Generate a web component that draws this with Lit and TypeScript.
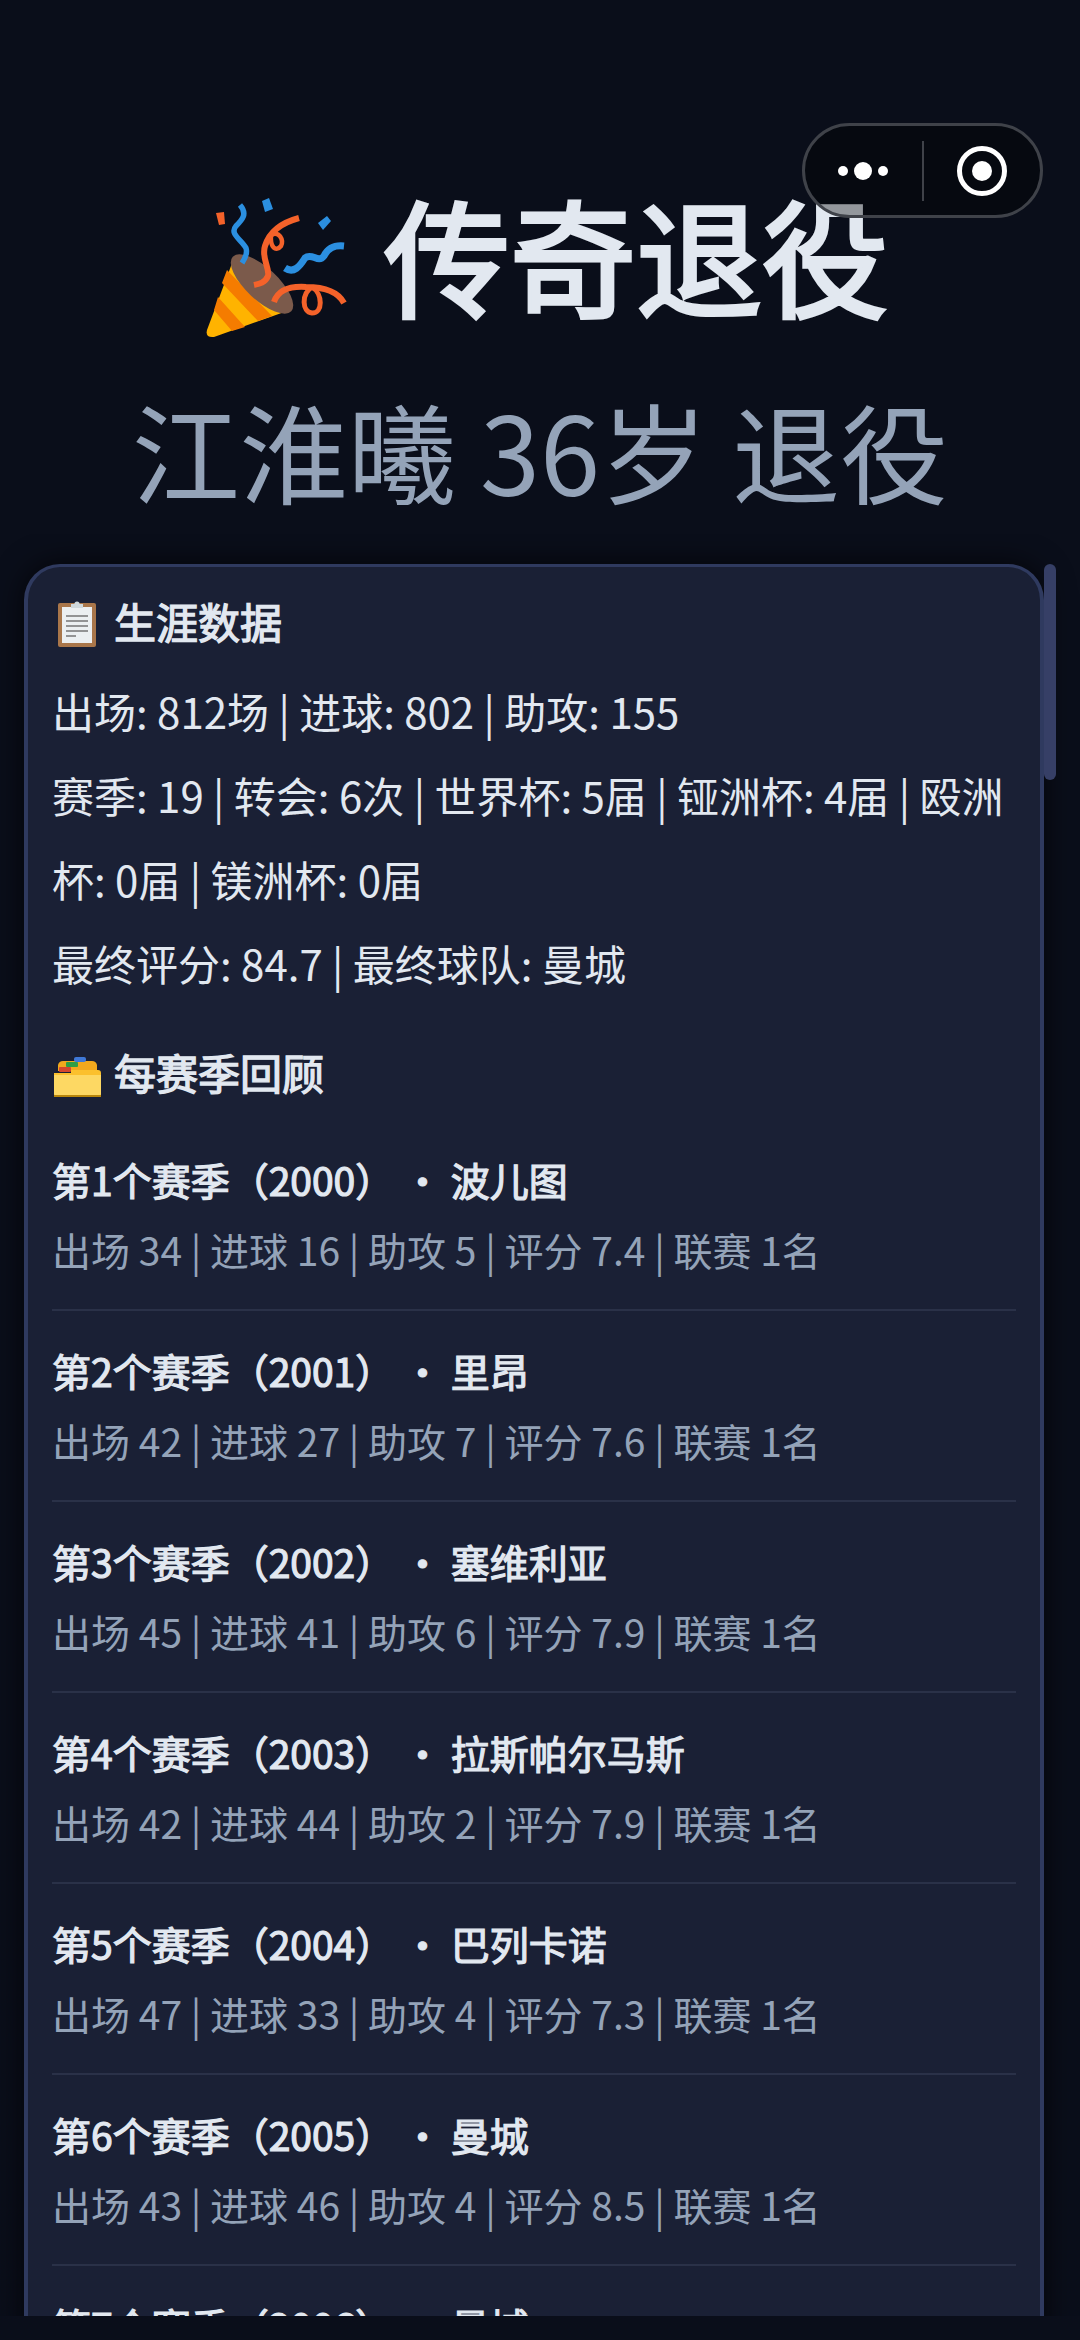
import { LitElement, html, css, svg } from 'lit';
import { customElement } from 'lit/decorators.js';

const seasons = [
  { n: 1, year: 2000, club: '波儿图', apps: 34, goals: 16, assists: 5, rating: '7.4' },
  { n: 2, year: 2001, club: '里昂', apps: 42, goals: 27, assists: 7, rating: '7.6' },
  { n: 3, year: 2002, club: '塞维利亚', apps: 45, goals: 41, assists: 6, rating: '7.9' },
  { n: 4, year: 2003, club: '拉斯帕尔马斯', apps: 42, goals: 44, assists: 2, rating: '7.9' },
  { n: 5, year: 2004, club: '巴列卡诺', apps: 47, goals: 33, assists: 4, rating: '7.3' },
  { n: 6, year: 2005, club: '曼城', apps: 43, goals: 46, assists: 4, rating: '8.5' },
  { n: 7, year: 2006, club: '曼城', apps: 44, goals: 40, assists: 5, rating: '8.3' },
];

const popper = svg`<svg class="popper" viewBox="0 0 170 170">
  <path d="M42 78 L15 150 Q13 158 22 157 L98 130 Z" fill="#ffb300"/>
  <path d="M35 90 L80 136 L66 141 L30 103 Z M26 117 L53 147 L40 151 L22 130 Z" fill="#f57c00"/>
  <ellipse cx="70" cy="104" rx="40" ry="16" transform="rotate(43 70 104)" fill="#7b5a4b"/>
  <path d="M48 25 C56 34 50 40 44 46 C37 54 50 60 54 68 C56 74 52 80 50 83" fill="none" stroke="#2b8fe0" stroke-width="5.5"/>
  <path d="M107 38 C92 42 78 50 73 66 C69 78 78 88 76 96 C73 103 67 104 62 105" fill="none" stroke="#f4622a" stroke-width="6"/>
  <path d="M79 55 C87 50 92 60 89 66 C84 72 78 68 79 55" fill="none" stroke="#f4622a" stroke-width="4.5"/>
  <path d="M93 88 C102 94 108 86 113 78 C120 72 126 84 132 76 C136 68 142 65 152 66" fill="none" stroke="#2b8fe0" stroke-width="7"/>
  <path d="M82 122 C86 110 98 106 114 107 C130 107 145 110 152 123" fill="none" stroke="#f4622a" stroke-width="6"/>
  <path d="M120 107 C109 114 110 132 120 133 C131 133 131 114 120 107" fill="none" stroke="#f4622a" stroke-width="5"/>
  <path d="M24 33 L32 32 L33 44 L27 45 Z" fill="#f4622a"/>
  <path d="M70 21 L77 18 L81 29 L73 32 Z" fill="#2b8fe0"/>
  <path d="M126 43 L135 36 L139 41 L131 50 Z" fill="#2b8fe0"/>
</svg>`;

const clipboard = svg`<svg class="clipboard" viewBox="0 0 38 46">
  <rect x="0" y="2" width="38" height="44" rx="2" fill="#a9764a"/>
  <rect x="4" y="6" width="30" height="36" fill="#eceff1"/>
  <path d="M8 15H30M8 20H30M8 25H30M8 30H30M8 35H18" stroke="#757575" stroke-width="1.6"/>
  <rect x="13" y="3" width="12" height="4" fill="#cfd8dc"/>
  <circle cx="19" cy="3" r="2.6" fill="#cfd8dc"/>
</svg>`;

const dividers = svg`<svg class="dividers" viewBox="0 0 47 40">
  <path d="M4 8 Q5 4 9 4 H38 Q42 4 43 8 V14 H4 Z" fill="#f2a81d"/>
  <rect x="20" y="0" width="12" height="5" rx="2" fill="#3f78d6"/>
  <rect x="12" y="5" width="12" height="5" rx="1" fill="#2f9e44"/>
  <rect x="5" y="10" width="12" height="5" rx="1" fill="#d5472f"/>
  <path d="M0 16 H47 V37 Q47 40 44 40 H3 Q0 40 0 37 Z" fill="#fdd863"/>
  <path d="M17 13 H44 Q47 13 47 16 V18 H0 V16 H17 Z" fill="#fbc02d"/>
  <rect x="0" y="38" width="47" height="2" fill="#b8860b"/>
</svg>`;

@customElement('app-root')
export class AppRoot extends LitElement {
  static styles = css`
    :host {
      display: block;
      font-family: 'Noto Sans CJK SC', 'Noto Sans', sans-serif;
    }

    .page {
      position: relative;
      height: 2340px;
      overflow: hidden;
      background: #0a0e1a;
      display: flex;
      flex-direction: column;
    }

    .header {
      padding-top: 173px;
      display: flex;
      flex-direction: column;
      align-items: center;
    }

    .title {
      display: flex;
      align-items: center;
      gap: 22px;
      margin: 0;
      height: 160px;
      font-size: 126px;
      line-height: 160px;
      font-weight: 400;
      -webkit-text-stroke: 4px;
      color: #e2e8f0;
    }

    .popper {
      width: 170px;
      height: 170px;
      margin-top: 24px;
    }

    .subtitle {
      margin: 41px 0 0;
      height: 150px;
      font-size: 108px;
      line-height: 150px;
      font-weight: 400;
      color: #94a3b8;
    }

    .viewport {
      margin: 10px 0 24px;
      padding: 30px 36px 0 24px;
      flex: 1;
      min-height: 0;
      overflow: hidden;
    }

    .card {
      background: #1a2035;
      border: solid #2f3a5f;
      border-width: 3px 4px;
      border-radius: 36px;
      padding: 21px 24px 48px;
      box-shadow: 0 0 30px rgba(0, 0, 0, 0.7);
    }

    h2 {
      margin: 0 0 15px;
      display: flex;
      align-items: center;
      gap: 12px;
      font-size: 42px;
      line-height: 66px;
      font-weight: 400;
      -webkit-text-stroke: 1.3px;
      color: #e2e8f0;
    }

    .slot {
      width: 50px;
      display: flex;
      justify-content: center;
      margin-top: 6px;
    }

    .clipboard {
      width: 38px;
      height: 46px;
    }

    .dividers {
      width: 47px;
      height: 40px;
      margin-top: 4px;
    }

    .stats {
      margin: 0 0 34px;
      font-size: 42px;
      line-height: 84px;
      color: #e2e8f0;
    }

    .season {
      padding: 24px 0 25px;
      border-bottom: 2px solid #2a3148;
    }

    .season-title {
      font-size: 39px;
      line-height: 70px;
      -webkit-text-stroke: 1.2px;
      color: #e2e8f0;
    }

    .season-line {
      font-size: 39px;
      line-height: 70px;
      color: #94a3b8;
    }

    .capsule {
      position: absolute;
      top: 123px;
      left: 802px;
      width: 241px;
      height: 95px;
      box-sizing: border-box;
      display: flex;
      align-items: center;
      border: 3px solid #3f4249;
      border-radius: 48px;
      background: rgba(0, 0, 0, 0.35);
    }

    .capsule-side {
      flex: 1;
      display: flex;
      align-items: center;
      justify-content: center;
    }

    .capsule-line {
      width: 2px;
      height: 60px;
      background: #3f4249;
    }

    .capsule svg {
      display: block;
    }

    .scrollbar {
      position: absolute;
      top: 564px;
      left: 1044px;
      width: 12px;
      height: 216px;
      border-radius: 6px;
      background: #363f66;
    }
  `;

  render() {
    return html`
      <div class="page">
        <div class="header">
          <h1 class="title">${popper}<span>传奇退役</span></h1>
          <p class="subtitle">江淮曦 36岁 退役</p>
        </div>
        <div class="viewport">
          <div class="card">
            <h2><span class="slot">${clipboard}</span><span>生涯数据</span></h2>
            <div class="stats">
              出场: 812场 | 进球: 802 | 助攻: 155<br />
              赛季: 19 | 转会: 6次 | 世界杯: 5届 | 铔洲杯: 4届 | 殴洲杯: 0届 | 镁洲杯: 0届<br />
              最终评分: 84.7 | 最终球队: 曼城
            </div>
            <h2><span class="slot">${dividers}</span><span>每赛季回顾</span></h2>
            ${seasons.map(
              s => html`
                <div class="season">
                  <div class="season-title">第${s.n}个赛季（${s.year}） · ${s.club}</div>
                  <div class="season-line">
                    出场 ${s.apps} | 进球 ${s.goals} | 助攻 ${s.assists} | 评分 ${s.rating} | 联赛 1名
                  </div>
                </div>
              `
            )}
          </div>
        </div>
        <div class="capsule">
          <div class="capsule-side">
            <svg width="52" height="20" viewBox="0 0 52 20" fill="#fff">
              <circle cx="6" cy="10" r="5" /><circle cx="26" cy="10" r="9" /><circle cx="46" cy="10" r="5" />
            </svg>
          </div>
          <div class="capsule-line"></div>
          <div class="capsule-side">
            <svg width="52" height="52" viewBox="0 0 52 52">
              <circle cx="26" cy="26" r="22.5" fill="none" stroke="#fff" stroke-width="5" />
              <circle cx="26" cy="26" r="10" fill="#fff" />
            </svg>
          </div>
        </div>
        <div class="scrollbar"></div>
      </div>
    `;
  }
}
